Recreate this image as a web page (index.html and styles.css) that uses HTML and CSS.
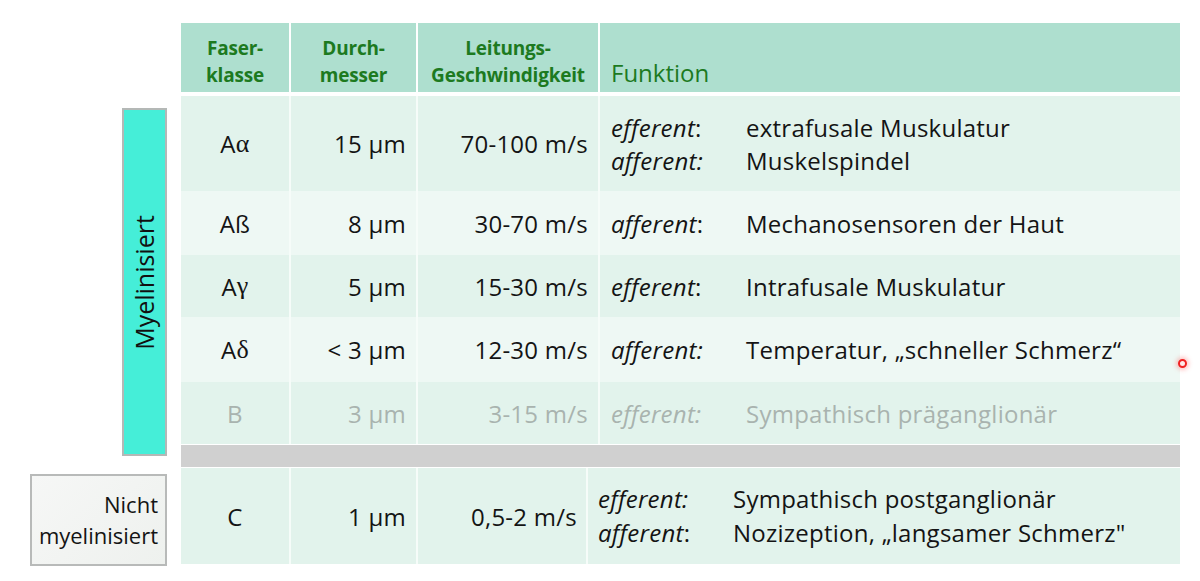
FILE: index.html
```html
<!DOCTYPE html>
<html lang="de">
<head>
<meta charset="utf-8">
<title>Faserklassen</title>
<link rel="stylesheet" href="styles.css">
</head>
<body>
<div class="slide">
  <div class="labels">
    <div class="myel"><span>Myelinisiert</span></div>
    <div class="nicht">Nicht<br>myelinisiert</div>
  </div>
  <div class="table">
    <div class="row head">
      <div class="cell">Faser-<br>klasse</div>
      <div class="cell">Durch-<br>messer</div>
      <div class="cell">Leitungs-<br>Geschwindigkeit</div>
      <div class="cell fn">Funktion</div>
    </div>
    <div class="body">
      <div class="row r1 dark">
        <div class="cell c1">A<span class="gr">α</span></div>
        <div class="cell num">15 µm</div>
        <div class="cell num">70-100 m/s</div>
        <div class="cell func">
          <div class="line"><span class="lab"><i>efferent</i>:</span><span>extrafusale Muskulatur</span></div>
          <div class="line"><span class="lab"><i>afferent:</i></span><span>Muskelspindel</span></div>
        </div>
      </div>
      <div class="row r2 light">
        <div class="cell c1">Aß</div>
        <div class="cell num">8 µm</div>
        <div class="cell num">30-70 m/s</div>
        <div class="cell func">
          <div class="line"><span class="lab"><i>afferent</i>:</span><span>Mechanosensoren der Haut</span></div>
        </div>
      </div>
      <div class="row r3 dark">
        <div class="cell c1">A<span class="gr">γ</span></div>
        <div class="cell num">5 µm</div>
        <div class="cell num">15-30 m/s</div>
        <div class="cell func">
          <div class="line"><span class="lab"><i>efferent</i>:</span><span>Intrafusale Muskulatur</span></div>
        </div>
      </div>
      <div class="row r4 light">
        <div class="cell c1">A<span class="gr">δ</span></div>
        <div class="cell num">&lt; 3 µm</div>
        <div class="cell num">12-30 m/s</div>
        <div class="cell func">
          <div class="line"><span class="lab"><i>afferent:</i></span><span>Temperatur, „schneller Schmerz“</span></div>
        </div>
      </div>
      <div class="row r5 dark faded">
        <div class="cell c1">B</div>
        <div class="cell num">3 µm</div>
        <div class="cell num">3-15 m/s</div>
        <div class="cell func">
          <div class="line"><span class="lab"><i>efferent:</i></span><span>Sympathisch präganglionär</span></div>
        </div>
      </div>
      <div class="divider"></div>
      <div class="row rc dark">
        <div class="cell c1">C</div>
        <div class="cell num">1 µm</div>
        <div class="cell num">0,5-2 m/s</div>
        <div class="cell func">
          <div class="line"><span class="lab"><i>efferent:</i></span><span>Sympathisch postganglionär</span></div>
          <div class="line"><span class="lab"><i>afferent</i>:</span><span>Nozizeption, „langsamer Schmerz"</span></div>
        </div>
      </div>
    </div>
  </div>
  <div class="pointer"></div>
</div>
</body>
</html>
```
FILE: styles.css
```css
* { box-sizing: border-box; }
html, body { margin: 0; padding: 0; background: #fff; }
body {
  width: 1200px;
  height: 581px;
  overflow: hidden;
  font-family: "Open Sans", "Noto Sans", sans-serif;
  color: #141414;
}
.slide {
  position: relative;
  display: flex;
  padding: 23px 0 0 30px;
  height: 581px;
}
.labels {
  width: 137px;
  margin-right: 14px;
  display: flex;
  flex-direction: column;
  align-items: flex-end;
}
.myel {
  margin-top: 85px;
  width: 45px;
  height: 348px;
  background: #45eed8;
  border: 2px solid #b4b8b6;
  display: flex;
  align-items: center;
  justify-content: center;
}
.myel span {
  display: block;
  transform: rotate(-90deg);
  white-space: nowrap;
  font-size: 25px;
  line-height: 1;
  color: #111;
}
.nicht {
  margin-top: 18px;
  width: 137px;
  height: 92px;
  border: 2px solid #b8bab9;
  background: linear-gradient(135deg, #f6f7f6 0%, #eef1ee 100%);
  font-size: 22px;
  line-height: 31px;
  text-align: right;
  padding: 13px 7px 0 0;
}
.table {
  width: 999px;
}
.row {
  display: grid;
  grid-template-columns: 108px 125px 180px 580px;
  column-gap: 2px;
}
.head {
  height: 69px;
  margin-bottom: 4px;
}
.head .cell {
  background: #aedfcf;
  color: #1d7a1f;
  font-weight: 700;
  font-size: 19px;
  letter-spacing: -0.2px;
  line-height: 27px;
  text-align: center;
  display: flex;
  align-items: flex-end;
  justify-content: center;
  padding-bottom: 3px;
}
.head .cell.fn {
  font-weight: 400;
  font-size: 24px;
  letter-spacing: 0;
  justify-content: flex-start;
  padding: 0 0 6px 11px;
}
.body .row {
  background: #f6fcf9;
}
.body .cell {
  display: flex;
  align-items: center;
  font-size: 24px;
  letter-spacing: 0.25px;
}
.dark .cell { background: #e2f3ec; }
.light .cell { background: #eef8f4; }
.c1 { justify-content: center; }
.gr { font-family: "Liberation Serif", "DejaVu Serif", serif; font-size: 26px; }
.num { justify-content: flex-end; padding-right: 10px; }
.func {
  flex-direction: column;
  align-items: flex-start !important;
  justify-content: center;
  padding-left: 11px;
}
.line { display: flex; line-height: 33px; }
.lab { width: 135px; flex: none; }
.r1 { height: 95px; }
.r2 { height: 64px; }
.r3 { height: 62px; }
.r4 { height: 65px; }
.r5 { height: 62px; }
.faded { color: #a9b3af; }
.divider {
  height: 22px;
  margin: 1px 0;
  background: #d0d0d0;
}
.rc {
  height: 96px;
  grid-template-columns: 108px 125px 168px 592px;
}
.rc .num:nth-child(3) { padding-right: 9px; }
.rc .func { padding-left: 10px; }
.rc .line { line-height: 34px; }
.pointer {
  position: absolute;
  left: 1178px;
  top: 359px;
  width: 9px;
  height: 9px;
  border-radius: 50%;
  border: 2px solid #f02020;
  background: #ffe8e8;
  box-shadow: 0 0 4px 2px rgba(255, 80, 80, 0.35);
}
```
